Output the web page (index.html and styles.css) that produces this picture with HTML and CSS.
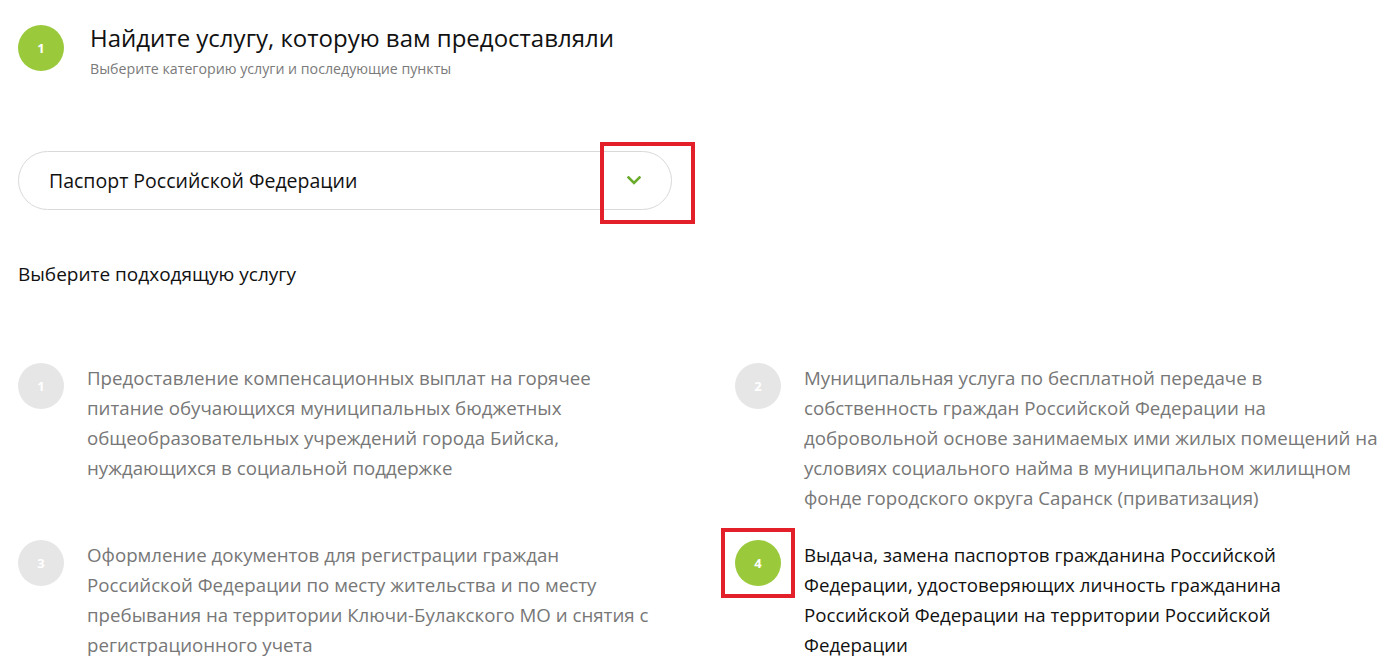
FILE: index.html
```html
<!DOCTYPE html>
<html lang="ru">
<head>
<meta charset="utf-8">
<title>Выбор услуги</title>
<link rel="stylesheet" href="styles.css">
</head>
<body>
<div class="page">
  <header class="step">
    <div class="num num-green">1</div>
    <div class="step-text">
      <h1 class="title">Найдите услугу, которую вам предоставляли</h1>
      <p class="subtitle">Выберите категорию услуги и последующие пункты</p>
    </div>
  </header>

  <div class="select">
    <span class="select-value">Паспорт Российской Федерации</span>
    <svg class="chevron" width="14" height="9" viewBox="0 0 14 9"><path d="M1.5 1.5 L7 7 L12.5 1.5" fill="none" stroke="#6aab2b" stroke-width="2.6" stroke-linecap="square"/></svg>
    <span class="mark mark-select"></span>
  </div>

  <p class="choose">Выберите подходящую услугу</p>

  <div class="services">
    <div class="service">
      <div class="num num-gray">1</div>
      <p class="service-text">Предоставление компенсационных выплат на горячее<br>питание обучающихся муниципальных бюджетных<br>общеобразовательных учреждений города Бийска,<br>нуждающихся в социальной поддержке</p>
    </div>
    <div class="service">
      <div class="num num-gray">2</div>
      <p class="service-text">Муниципальная услуга по бесплатной передаче в<br>собственность граждан Российской Федерации на<br>добровольной основе занимаемых ими жилых помещений на<br>условиях социального найма в муниципальном жилищном<br>фонде городского округа Саранск (приватизация)</p>
    </div>
    <div class="service">
      <div class="num num-gray">3</div>
      <p class="service-text">Оформление документов для регистрации граждан<br>Российской Федерации по месту жительства и по месту<br>пребывания на территории Ключи-Булакского МО и снятия с<br>регистрационного учета</p>
    </div>
    <div class="service service-active">
      <div class="num num-green">4</div>
      <p class="service-text">Выдача, замена паспортов гражданина Российской<br>Федерации, удостоверяющих личность гражданина<br>Российской Федерации на территории Российской<br>Федерации</p>
      <span class="mark mark-item"></span>
    </div>
  </div>
</div>
</body>
</html>
```

FILE: styles.css
```css
* { box-sizing: border-box; }

html, body {
  margin: 0;
  padding: 0;
  background: #ffffff;
}

body {
  font-family: "Open Sans", "Noto Sans", sans-serif;
  color: #111111;
}

.page {
  padding: 25px 18px 0 18px;
}

.step {
  display: flex;
  align-items: flex-start;
  gap: 26px;
}

.num {
  flex: 0 0 46px;
  width: 46px;
  height: 46px;
  border-radius: 50%;
  display: flex;
  align-items: center;
  justify-content: center;
  color: #ffffff;
  font-weight: 700;
  font-size: 13px;
}

.num-green { background: #9aca3c; }
.num-gray { background: #e6e6e6; }

.title {
  margin: 0;
  font-size: 24px;
  font-weight: 500;
  line-height: 26px;
  color: #111111;
}

.subtitle {
  margin: 10px 0 0 0;
  font-size: 14.2px;
  line-height: 16px;
  color: #7a7a7a;
}

.select {
  position: relative;
  margin-top: 74px;
  width: 654px;
  height: 59px;
  border: 1px solid #d9d9d9;
  border-radius: 30px;
  display: flex;
  align-items: center;
  justify-content: space-between;
  padding: 0 30px 0 30px;
}

.select-value {
  font-size: 19.5px;
  font-weight: 500;
  color: #111111;
}

.chevron {
  display: block;
}

.mark {
  position: absolute;
  border: 4px solid #e3202a;
  pointer-events: none;
}

.mark-select {
  left: 581px;
  top: -10px;
  width: 95px;
  height: 82px;
}

.choose {
  margin: 52px 0 0 0;
  font-size: 19px;
  line-height: 24px;
  color: #111111;
}

.services {
  margin-top: 77px;
  display: grid;
  grid-template-columns: 717px 1fr;
  row-gap: 27px;
}

.service {
  position: relative;
  display: flex;
  align-items: flex-start;
  gap: 23px;
}

.service-text {
  margin: 0;
  font-size: 18.7px;
  line-height: 30px;
  color: #777777;
  white-space: nowrap;
}

.service-active .service-text {
  color: #111111;
}

.mark-item {
  left: -14px;
  top: -12px;
  width: 74px;
  height: 70px;
}
```
